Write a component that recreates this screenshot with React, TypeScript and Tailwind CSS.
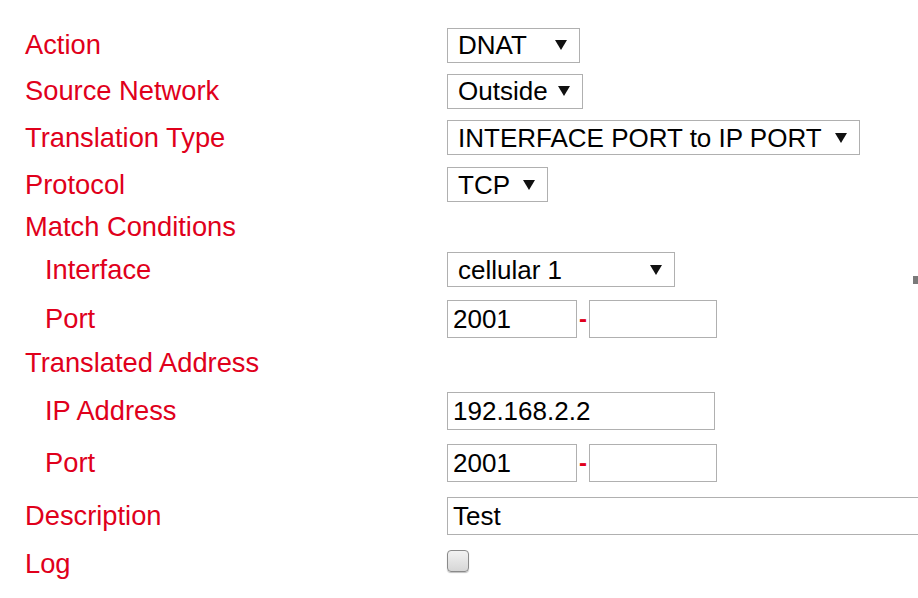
import React from 'react';

const Arrow = () => (
  <svg width="12" height="10" viewBox="0 0 12 10" className="shrink-0">
    <polygon points="0,0 12,0 6,10" fill="#111" />
  </svg>
);

function Select({ value, width }: { value: string; width: string }) {
  return (
    <div
      className={`flex h-[35px] items-center justify-between border border-[#b0b0b0] bg-white pl-[10px] pr-[12px] text-[26px] text-black ${width}`}
    >
      <span className="leading-none">{value}</span>
      <Arrow />
    </div>
  );
}

function TextInput({ value, width }: { value: string; width: string }) {
  return (
    <div
      className={`flex h-[38px] shrink-0 items-center border border-[#b0b0b0] bg-white pl-[5px] text-[26px] text-black ${width}`}
    >
      <span className="leading-none">{value}</span>
    </div>
  );
}

function PortRange({ value }: { value: string }) {
  return (
    <div className="flex items-center">
      <TextInput value={value} width="w-[130px]" />
      <span className="w-[12px] text-center text-[24px] font-bold leading-none text-[#e0001b]">-</span>
      <TextInput value="" width="w-[128px]" />
    </div>
  );
}

function Row({
  label,
  sub,
  height,
  children,
}: {
  label: string;
  sub?: boolean;
  height: string;
  children?: React.ReactNode;
}) {
  return (
    <div className={`flex items-center ${height}`}>
      <div className={`w-[422px] shrink-0 text-[27.3px] leading-none text-[#e0001b] ${sub ? 'pl-[20px]' : ''}`}>
        {label}
      </div>
      <div className="flex items-center">{children}</div>
    </div>
  );
}

export default function App() {
  return (
    <div
      className="relative h-[598px] w-[918px] overflow-hidden bg-white pl-[25px] pt-[22px]"
      style={{ fontFamily: '"Liberation Sans", Arial, sans-serif' }}
    >
      <Row label="Action" height="h-[46px]">
        <Select value="DNAT" width="w-[133px]" />
      </Row>
      <Row label="Source Network" height="h-[46px]">
        <Select value="Outside" width="w-[136px]" />
      </Row>
      <Row label="Translation Type" height="h-[47px]">
        <Select value="INTERFACE PORT to IP PORT" width="w-[413px]" />
      </Row>
      <Row label="Protocol" height="h-[47px]">
        <Select value="TCP" width="w-[101px]" />
      </Row>
      <Row label="Match Conditions" height="h-[37px]" />
      <Row label="Interface" sub height="h-[49px]">
        <Select value="cellular 1" width="w-[228px]" />
      </Row>
      <Row label="Port" sub height="h-[50px]">
        <PortRange value="2001" />
      </Row>
      <Row label="Translated Address" height="h-[38px]" />
      <Row label="IP Address" sub height="h-[57px]">
        <TextInput value="192.168.2.2" width="w-[268px]" />
      </Row>
      <Row label="Port" sub height="h-[48px]">
        <PortRange value="2001" />
      </Row>
      <Row label="Description" height="h-[57px]">
        <TextInput value="Test" width="w-[520px]" />
      </Row>
      <Row label="Log" height="h-[40px]">
        <div className="-mt-[7px] h-[22px] w-[22px] rounded-[4px] border border-[#8a8a8a] bg-gradient-to-b from-[#f2f2f2] to-[#d6d6d6] shadow-[0_1px_1px_rgba(0,0,0,0.25)]" />
      </Row>
      <div className="absolute left-[913px] top-[276px] h-[8px] w-[5px] bg-[#7a7a7a]" />
    </div>
  );
}
